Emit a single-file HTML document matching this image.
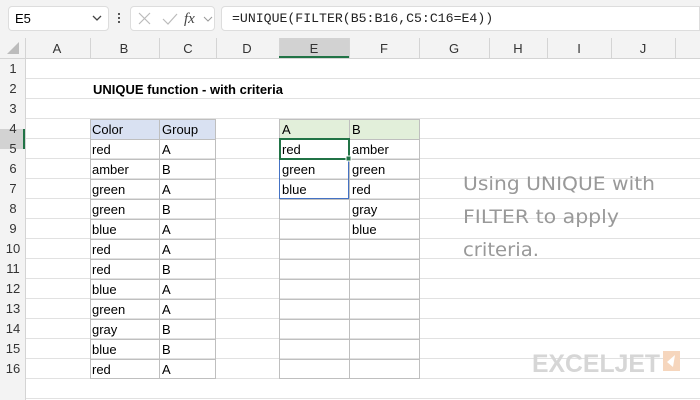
<!DOCTYPE html>
<html><head><style>
*{margin:0;padding:0;box-sizing:border-box}
body{width:700px;height:400px;overflow:hidden;background:#fff;font-family:"Liberation Sans",Calibri,sans-serif;position:relative}
.a{position:absolute}
.t{position:absolute;font-size:13px;line-height:20px;color:#000;padding-left:3px;white-space:nowrap}
</style></head><body>
<div class="a" style="left:0;top:0;width:700px;height:38px;background:#f3f3f3"></div>
<div class="a" style="left:8px;top:6px;width:101px;height:25px;background:#fff;border:1px solid #ddd;border-radius:4px"></div>
<div class="t" style="left:12px;top:9px;font-size:13px">E5</div>
<svg class="a" style="left:92px;top:15px" width="10" height="7"><path d="M1 1L5 5L9 1" stroke="#444" fill="none" stroke-width="1.3"/></svg>
<div class="a" style="left:118px;top:13px;width:2px;height:2px;background:#555;box-shadow:0 4px #555,0 8px #555"></div>
<div class="a" style="left:130px;top:6px;width:85px;height:25px;background:#fff;border:1px solid #ddd;border-radius:4px"></div>
<svg class="a" style="left:137px;top:12px" width="80" height="14"><path d="M2 1L13 12M13 1L2 12" stroke="#bbb" stroke-width="1.2"/><path d="M26 7L31 12L40 2" stroke="#bbb" fill="none" stroke-width="1.2"/><text x="47" y="11" font-family="Liberation Serif" font-style="italic" font-size="15" fill="#444">fx</text><path d="M67 5L71 9L75 5" stroke="#999" fill="none"/></svg>
<div class="a" style="left:221px;top:6px;width:479px;height:25px;background:#fff;border:1px solid #ddd;border-radius:4px 0 0 4px"></div>
<div class="t" style="left:229px;top:9px;font-family:'Liberation Mono',monospace;font-size:13.2px;color:#222">=UNIQUE(FILTER(B5:B16,C5:C16=E4))</div>
<svg class="a" style="left:0;top:38px" width="700" height="362">
<rect x="0" y="0" width="700" height="20" fill="#f3f3f3"/>
<rect x="279" y="0" width="70" height="20" fill="#d2d2d2"/>
<rect x="0" y="20" width="25" height="342" fill="#f3f3f3"/>
<rect x="0" y="91" width="25" height="20" fill="#d2d2d2"/>
<path d="M7 16L19 16L19 4Z" fill="#bcbcbc"/>
<g stroke="#e1e1e1" stroke-width="1">
<line x1="25" y1="40.5" x2="700" y2="40.5"/><line x1="25" y1="60.5" x2="700" y2="60.5"/><line x1="25" y1="80.5" x2="700" y2="80.5"/>
<line x1="25" y1="100.5" x2="700" y2="100.5"/><line x1="25" y1="120.5" x2="700" y2="120.5"/>
<line x1="25" y1="140.5" x2="700" y2="140.5"/><line x1="25" y1="160.5" x2="700" y2="160.5"/><line x1="25" y1="180.5" x2="700" y2="180.5"/>
<line x1="25" y1="200.5" x2="700" y2="200.5"/><line x1="25" y1="220.5" x2="700" y2="220.5"/><line x1="25" y1="240.5" x2="700" y2="240.5"/>
<line x1="25" y1="260.5" x2="700" y2="260.5"/><line x1="25" y1="280.5" x2="700" y2="280.5"/><line x1="25" y1="300.5" x2="700" y2="300.5"/>
<line x1="25" y1="320.5" x2="700" y2="320.5"/><line x1="25" y1="340.5" x2="700" y2="340.5"/><line x1="25" y1="360.5" x2="700" y2="360.5"/>
</g>
<g stroke="#d4d4d4">
<line x1="0" y1="20.5" x2="700" y2="20.5"/>
<line x1="25.5" y1="0" x2="25.5" y2="362"/>
<line x1="90.5" y1="0" x2="90.5" y2="20"/><line x1="159.5" y1="0" x2="159.5" y2="20"/><line x1="216.5" y1="0" x2="216.5" y2="20"/>
<line x1="279.5" y1="0" x2="279.5" y2="20"/><line x1="349.5" y1="0" x2="349.5" y2="20"/><line x1="419.5" y1="0" x2="419.5" y2="20"/>
<line x1="489.5" y1="0" x2="489.5" y2="20"/><line x1="547.5" y1="0" x2="547.5" y2="20"/><line x1="611.5" y1="0" x2="611.5" y2="20"/><line x1="675.5" y1="0" x2="675.5" y2="20"/>
</g>
<rect x="279" y="18" width="70" height="2" fill="#217346"/>
<rect x="23" y="91" width="2" height="20" fill="#217346"/>
<rect x="90" y="81" width="126" height="20" fill="#d9e1f2"/>
<rect x="279" y="81" width="140" height="20" fill="#e2efda"/>
<g stroke="#bfbfbf">
<path d="M90.5 81V341M159.5 81V341M215.5 81V341M279.5 81V341M349.5 81V341M419.5 81V341"/>
<path d="M90 81.5H216M90 101.5H216M90 121.5H216M90 141.5H216M90 161.5H216M90 181.5H216M90 201.5H216M90 221.5H216M90 241.5H216M90 261.5H216M90 281.5H216M90 301.5H216M90 321.5H216M90 340.5H216"/>
<path d="M279 81.5H420M279 101.5H420M279 121.5H420M279 141.5H420M279 161.5H420M279 181.5H420M279 201.5H420M279 221.5H420M279 241.5H420M279 261.5H420M279 281.5H420M279 301.5H420M279 321.5H420M279 340.5H420"/>
</g>
<rect x="279.5" y="121.5" width="69" height="39" fill="none" stroke="#4472c4"/>
<rect x="280" y="101" width="69" height="20" fill="none" stroke="#217346" stroke-width="2"/>
<rect x="346" y="118" width="5" height="5" fill="#217346" stroke="#fff"/>
<g font-size="13" fill="#333" text-anchor="middle" font-family="Liberation Sans">
<text x="57" y="15">A</text><text x="124" y="15">B</text><text x="188" y="15">C</text><text x="247" y="15">D</text><text x="314" y="15">E</text><text x="384" y="15">F</text><text x="454" y="15">G</text><text x="518" y="15">H</text><text x="579" y="15">I</text><text x="643" y="15">J</text>
<text x="13" y="35">1</text><text x="13" y="55">2</text><text x="13" y="75">3</text><text x="13" y="95">4</text><text x="13" y="115">5</text><text x="13" y="135">6</text><text x="13" y="155">7</text><text x="13" y="175">8</text><text x="13" y="195">9</text><text x="13" y="215">10</text><text x="13" y="235">11</text><text x="13" y="255">12</text><text x="13" y="275">13</text><text x="13" y="295">14</text><text x="13" y="315">15</text><text x="13" y="335">16</text>
</g>
<g font-size="13" fill="#000" font-family="Liberation Sans">
<text x="93" y="56" font-weight="bold">UNIQUE function - with criteria</text>
<text x="92" y="96">Color</text><text x="162" y="96">Group</text>
<text x="92" y="116">red</text><text x="162" y="116">A</text>
<text x="92" y="136">amber</text><text x="162" y="136">B</text>
<text x="92" y="156">green</text><text x="162" y="156">A</text>
<text x="92" y="176">green</text><text x="162" y="176">B</text>
<text x="92" y="196">blue</text><text x="162" y="196">A</text>
<text x="92" y="216">red</text><text x="162" y="216">A</text>
<text x="92" y="236">red</text><text x="162" y="236">B</text>
<text x="92" y="256">blue</text><text x="162" y="256">A</text>
<text x="92" y="276">green</text><text x="162" y="276">A</text>
<text x="92" y="296">gray</text><text x="162" y="296">B</text>
<text x="92" y="316">blue</text><text x="162" y="316">B</text>
<text x="92" y="336">red</text><text x="162" y="336">A</text>
<text x="282" y="96">A</text><text x="352" y="96">B</text>
<text x="282" y="116">red</text><text x="352" y="116">amber</text>
<text x="282" y="136">green</text><text x="352" y="136">green</text>
<text x="282" y="156">blue</text><text x="352" y="156">red</text>
<text x="352" y="176">gray</text><text x="352" y="196">blue</text>
</g>
<g font-size="19" fill="#999" font-family="'DejaVu Sans',sans-serif">
<text x="463" y="152" textLength="192" lengthAdjust="spacingAndGlyphs">Using UNIQUE with</text>
<text x="463" y="185" textLength="156" lengthAdjust="spacingAndGlyphs">FILTER to apply</text>
<text x="463" y="218" textLength="76" lengthAdjust="spacingAndGlyphs">criteria.</text>
</g>
<text x="532" y="334" font-size="25" font-weight="bold" fill="#d6d6d6" font-family="Liberation Sans" textLength="128" lengthAdjust="spacingAndGlyphs">EXCELJET</text>
<rect x="663" y="313" width="17" height="20" fill="#f6d6bd"/>
<path d="M675 317L667 324L673 329Z" fill="#fff"/>
</svg>
</body></html>
